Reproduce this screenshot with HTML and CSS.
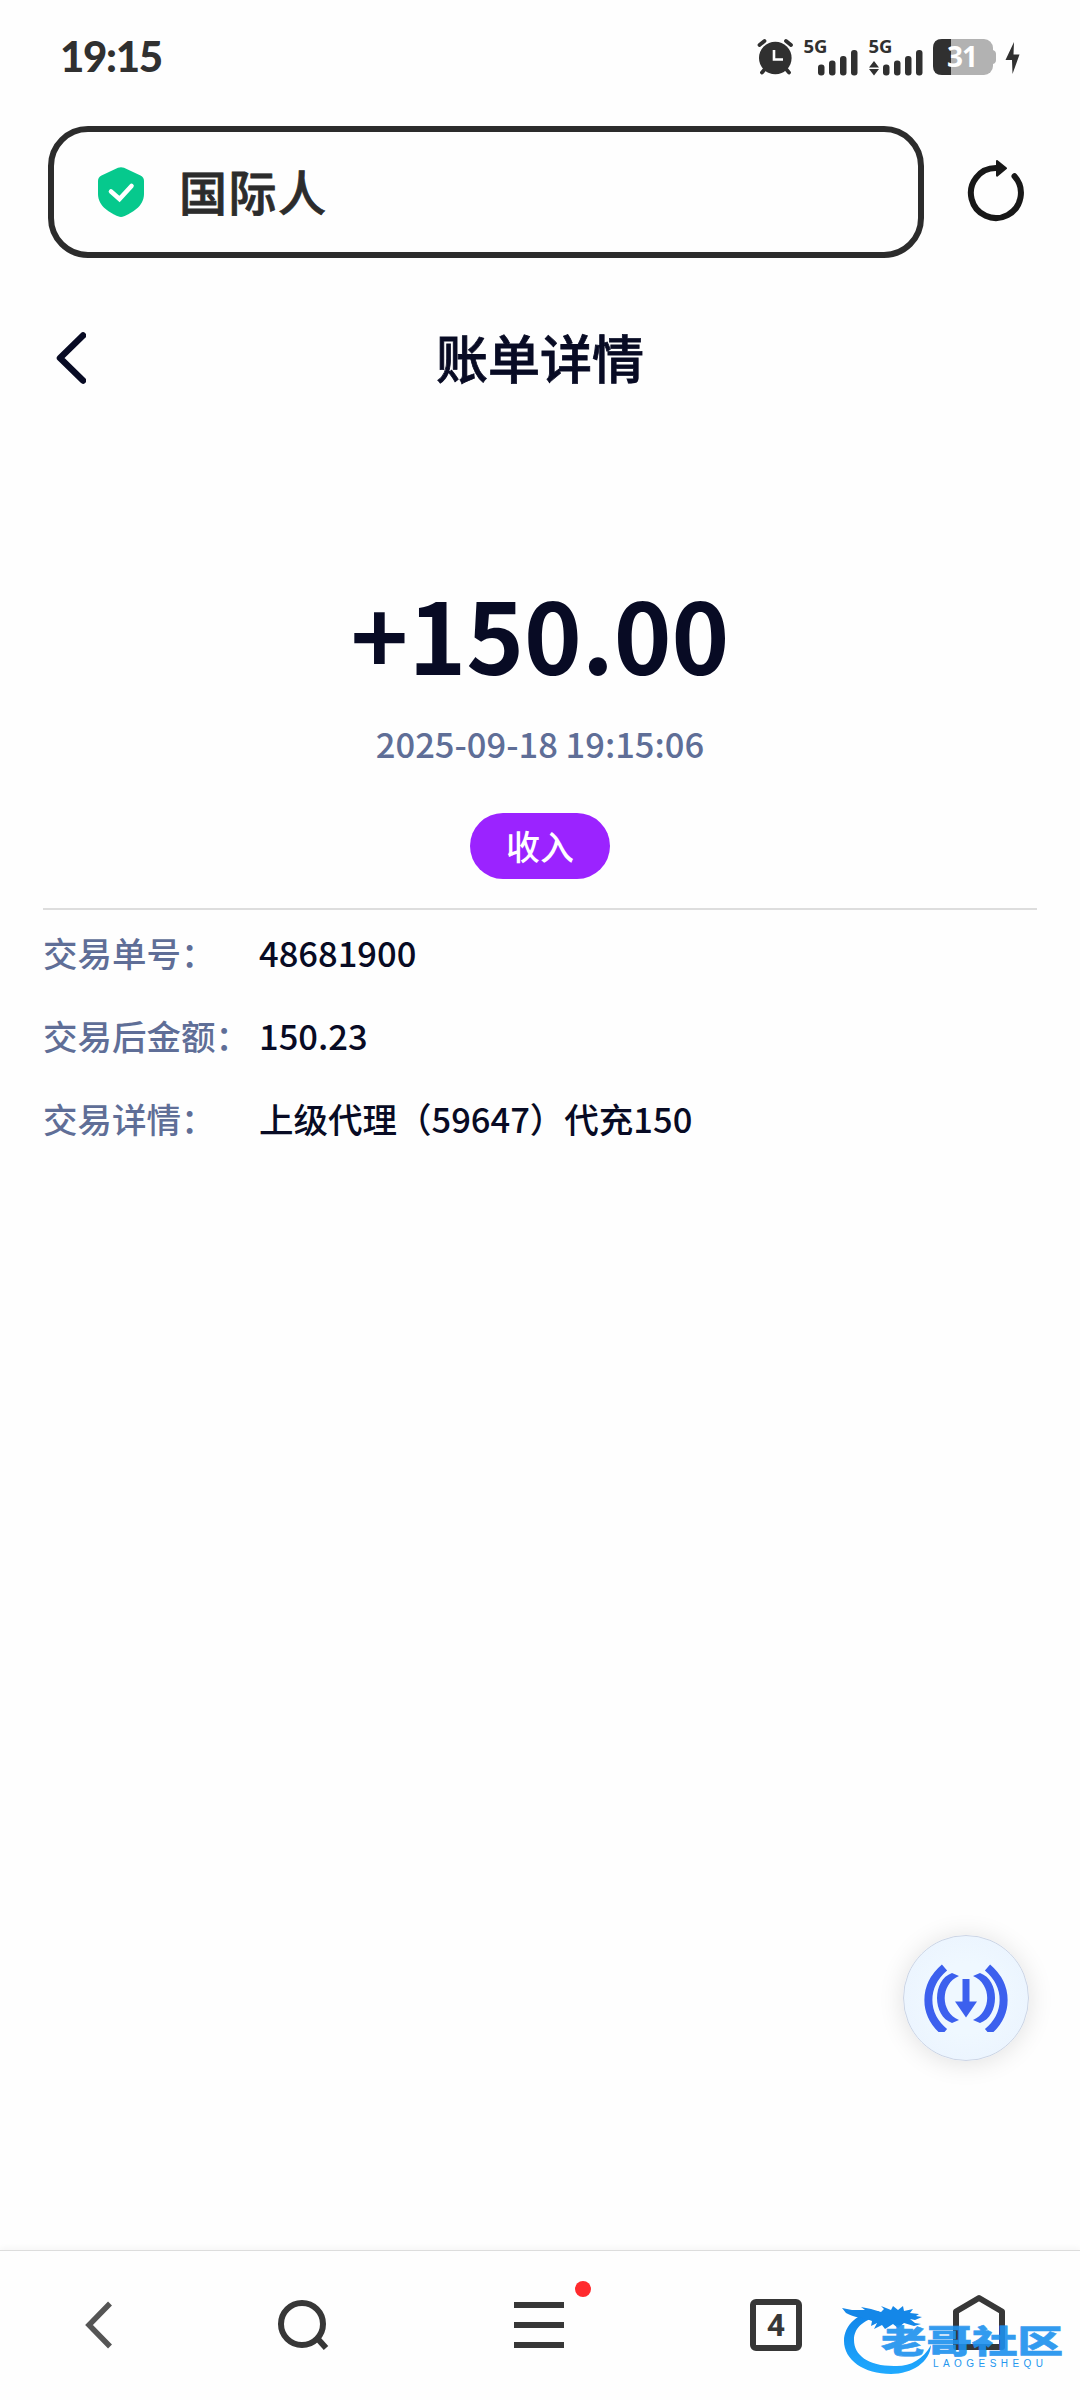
FILE: index.html
```html
<!DOCTYPE html>
<html lang="zh-CN">

<head>
    <meta charset="UTF-8">
    <meta name="viewport" content="width=device-width, initial-scale=1.0">
    <title>账单详情</title>
    <link rel="stylesheet" href="styles.css">
</head>

<body>
    <div class="status-bar">
        <div class="time">19:15</div>
        <svg class="status-icons" width="270" height="59" viewBox="755 25 270 59">
            <g fill="#303030">
                <circle cx="775.3" cy="58" r="16.3"/>
                <path d="M759.500 45l5-4M786 41l5 4M765 69l-3 3.500M786 69l3 3.500" stroke="#303030" stroke-width="3.800" stroke-linecap="round"/>
                <path d="M774 50v9.500h9" fill="none" stroke="#fff" stroke-width="2.600"/>
                <text class="net" x="803.500" y="52.500" textLength="24" lengthAdjust="spacingAndGlyphs">5G</text>
                <rect x="818" y="64.500" width="6.500" height="11" rx="3"/>
                <rect x="829" y="60.500" width="6.500" height="15" rx="3"/>
                <rect x="840" y="56" width="6.500" height="19.500" rx="3"/>
                <rect x="851" y="50" width="6.500" height="25.500" rx="3"/>
                <text class="net" x="868.500" y="52.500" textLength="24" lengthAdjust="spacingAndGlyphs">5G</text>
                <path d="M869 67.500l5-6.500 5 6.500zM869 69l5 6.500 5-6.500z"/>
                <rect x="883" y="64.500" width="6.500" height="11" rx="3"/>
                <rect x="894" y="60.500" width="6.500" height="15" rx="3"/>
                <rect x="905" y="56" width="6.500" height="19.500" rx="3"/>
                <rect x="916" y="50" width="6.500" height="25.500" rx="3"/>
                <path d="M993 50q3 1 3 4v6q0 3-3 4z" fill="#b2b2b2"/>
                <rect x="933" y="39" width="60" height="36" rx="9" fill="#b2b2b2"/>
                <path d="M951 39h-9q-9 0-9 9v18q0 9 9 9h9z"/>
                <text class="battery" x="947" y="67">31</text>
                <path d="M1014 42l-8.500 18h6.500l0.500 14 7-19.500h-6z"/>
            </g>
        </svg>
    </div>

    <div class="browser-bar">
        <div class="address">
            <svg width="46" height="50" viewBox="0 0 46 50">
                <path d="M20 .8q3-1.300 6 0L42.500 8.500Q46 10 46 14v13C46 40 33 46 26 49.300q-3 1.400-6 0C13 46 0 40 0 27V14q0-4 3.500-5.500z" fill="#06c98d"/>
                <path d="M13 24.500l8.500 7.500 12-13" fill="none" stroke="#fff" stroke-width="4.600" stroke-linecap="round"/>
            </svg>
            <span>国际人</span>
        </div>
        <svg class="refresh" width="60" height="66" viewBox="966 158 60 66">
            <path d="M996 168a25 25 0 1 0 18.500 8.300" fill="none" stroke="#181818" stroke-width="6" stroke-linecap="round"/>
            <path d="M997 161l9 7.300-9 7.300z" fill="#181818" stroke="#181818" stroke-width="2" stroke-linejoin="round"/>
        </svg>
    </div>

    <div class="title-bar">
        <svg class="back" width="30" height="52" viewBox="0 0 30 52">
            <path d="M27 3.500L4 26l23 22.500" fill="none" stroke="#080b24" stroke-width="6.500" stroke-linecap="round" stroke-linejoin="round"/>
        </svg>
        <h1>账单详情</h1>
    </div>

    <div class="summary">
        <div class="amount">+150.00</div>
        <div class="date">2025-09-18 19:15:06</div>
        <div class="tag">收入</div>
    </div>

    <div class="detail">
        <div class="row">
            <div class="label">交易单号：</div>
            <div>48681900</div>
        </div>
        <div class="row">
            <div class="label">交易后金额：</div>
            <div>150.23</div>
        </div>
        <div class="row">
            <div class="label">交易详情：</div>
            <div>上级代理（59647）代充150</div>
        </div>
    </div>

    <div class="float-btn">
        <svg width="84" height="68" viewBox="-42 -34 84 68" fill="none" stroke="#3c60ee" stroke-width="8">
            <path d="M-21.500-30.500C-43-12-43 16-21.500 34M21.500-30.500C43-12 43 16 21.500 34"/>
            <path d="M-7-22L-14-25C-34-18-34 18-14 25L-7 22C-26 14-26-14-7-22zM7-22L14-25C34-18 34 18 14 25L7 22C26 14 26-14 7-22z" fill="#3c60ee" stroke="none"/>
            <path d="M-3.500-19h7V3.500h7.500L0 19.500-11 3.500h7.500z" fill="#3c60ee" stroke="none"/>
        </svg>
    </div>

    <div class="nav">
        <div class="nav-item">
            <svg width="28" height="48" viewBox="0 0 28 48">
                <path d="M25 2.500L4 24l21 21.500" fill="none" stroke="#555" stroke-width="5.500"/>
            </svg>
        </div>
        <div class="nav-item">
            <svg width="52" height="52" viewBox="0 0 52 52" fill="none" stroke="#373737" stroke-width="6">
                <circle cx="25" cy="25" r="21"/>
                <path d="M40 39l9 10"/>
            </svg>
        </div>
        <div class="nav-item">
            <div class="menu">
                <i></i><i></i><i></i>
                <b class="dot"></b>
            </div>
        </div>
        <div class="nav-item">
            <div class="tabs">4</div>
        </div>
        <div class="nav-item">
            <svg class="home" width="52" height="58" viewBox="0 0 52 58">
                <path d="M3 53V17.500L26 4l23 13.500V53z" fill="none" stroke="#373737" stroke-width="6" stroke-linejoin="round"/>
            </svg>
        </div>
    </div>

    <svg class="watermark" width="226" height="76" viewBox="840 2300 226 76">
        <defs>
            <linearGradient id="blue" x1="0" y1="0" x2="0" y2="1">
                <stop offset="0" stop-color="#1083e8"/>
                <stop offset="1" stop-color="#20aaff"/>
            </linearGradient>
        </defs>
        <path d="M878 2311C858 2312 844 2325 844 2341C844 2360 864 2374 891 2374C912 2374 930 2362 931 2345C923 2360 909 2367 894 2366C868 2366 854 2355 854 2340C854 2327 865 2318 884 2316z" fill="url(#blue)"/>
        <path d="M842 2308l10 2 13 0-4-3 10 2 10 3 3-3-3-3 10 4 2-4 5 4 5-4 1 5 9-2-3 4 9 1-3 2 6 1-7 3-5-1 5 4 6 1-7 2-10-3-6 5-5-4-8 5-3-4-8 4 3-6-6 3 1-5c-9-4-18-3-26-8z" fill="#1487e8"/>
        <text x="881" y="2353" textLength="182" lengthAdjust="spacingAndGlyphs" class="mark-name">老哥社区</text>
        <text x="933" y="2367" textLength="110" class="mark-sub">LAOGESHEQU</text>
    </svg>
</body>

</html>
```
FILE: styles.css
```css
* {
    box-sizing: border-box;
}

body {
    margin: 0;
    height: 2400px;
    display: flex;
    flex-direction: column;
    background: #fefefe;
    color: #080b24;
    font-family: "Noto Sans CJK SC", sans-serif;
}

svg {
    display: block;
    flex: none;
}

.status-bar {
    height: 126px;
    padding: 25px 55px 0 60px;
    display: flex;
    justify-content: space-between;
}

.time {
    height: 63px;
    line-height: 63px;
    font-family: Lato, sans-serif;
    font-size: 42px;
    font-weight: 900;
    letter-spacing: -1.300px;
    color: #303030;
}

.net {
    font: 700 18px "Open Sans", sans-serif;
}

.battery {
    font: 700 28px "Open Sans", sans-serif;
    letter-spacing: -1px;
    fill: #fff;
}

.browser-bar {
    height: 132px;
    padding: 0 54px 0 48px;
    display: flex;
    align-items: center;
    justify-content: space-between;
}

.address {
    width: 876px;
    height: 132px;
    padding-left: 44px;
    display: flex;
    align-items: center;
    gap: 35px;
    border: 6px solid #2c2c2c;
    border-radius: 40px;
    color: #2c2c2c;
    font-size: 48px;
    font-weight: 500;
    letter-spacing: 1.5px;
    -webkit-text-stroke: 0.8px #2c2c2c;
}

.address span {
    margin-bottom: 4px;
}

.refresh {
    margin-bottom: 3px;
}

.title-bar {
    height: 199px;
    padding: 0 56px;
    display: flex;
    align-items: center;
}

.title-bar h1 {
    flex: 1;
    margin: 0 30px 2px 0;
    text-align: center;
    font-size: 52px;
    font-weight: 500;
    -webkit-text-stroke: 0.8px #080b24;
}

.summary {
    height: 453px;
    margin: 0 43px;
    padding-top: 115px;
    display: flex;
    flex-direction: column;
    align-items: center;
    border-bottom: 2px solid #ddd;
}

.amount {
    height: 120px;
    line-height: 120px;
    font-size: 98px;
    font-weight: 700;
}

.date {
    height: 48px;
    margin-top: 27px;
    line-height: 48px;
    font-size: 34.500px;
    font-weight: 500;
    color: #5f6e97;
}

.tag {
    width: 140px;
    height: 66px;
    margin-top: 46px;
    line-height: 66px;
    text-align: center;
    border-radius: 33px;
    background: #9b23ff;
    color: #fff;
    font-size: 34px;
    font-weight: 500;
}

.detail {
    padding: 0 43px;
    font-size: 34.500px;
    font-weight: 500;
}

.row {
    height: 83px;
    display: flex;
    align-items: center;
}

.label {
    width: 216px;
    color: #5f6e97;
    white-space: nowrap;
}

.float-btn {
    width: 126px;
    height: 126px;
    margin: auto 51px 189px auto;
    display: flex;
    align-items: center;
    justify-content: center;
    border: 1px solid #ccd5e5;
    border-radius: 50%;
    background: radial-gradient(#eff8ff 40%, #e9f2fe);
    box-shadow: 0 2px 26px rgba(0, 0, 0, 0.12);
}

.nav {
    height: 150px;
    padding-bottom: 2px;
    display: grid;
    grid-template-columns: 198px 210px 262px 212px 194px;
    border-top: 1px solid #ddd;
    box-shadow: 0 -2px 6px rgba(0, 0, 0, 0.04);
}

.nav-item {
    display: flex;
    align-items: center;
    justify-content: center;
}

.menu {
    position: relative;
    width: 50px;
    height: 46px;
    display: flex;
    flex-direction: column;
    justify-content: space-between;
}

.menu i {
    height: 6px;
    background: #373737;
}

.dot {
    position: absolute;
    top: -21px;
    right: -27px;
    width: 16px;
    height: 16px;
    border-radius: 50%;
    background: #ff2a2d;
}

.tabs {
    width: 52px;
    height: 52px;
    line-height: 41px;
    text-align: center;
    border: 6px solid #373737;
    border-radius: 6px;
    color: #373737;
    font-family: Roboto, sans-serif;
    font-size: 32px;
    font-weight: 700;
}

.home {
    margin-bottom: 4px;
}

.watermark {
    position: absolute;
    left: 840px;
    top: 2300px;
}

.mark-name {
    font: 900 32px "Noto Sans CJK SC", sans-serif;
    fill: #1d91ee;
    stroke: #1d91ee;
    stroke-width: 0.6px;
    opacity: 0.9;
}

.mark-sub {
    font: 10px "Liberation Sans", sans-serif;
    fill: #2497ee;
}
```
